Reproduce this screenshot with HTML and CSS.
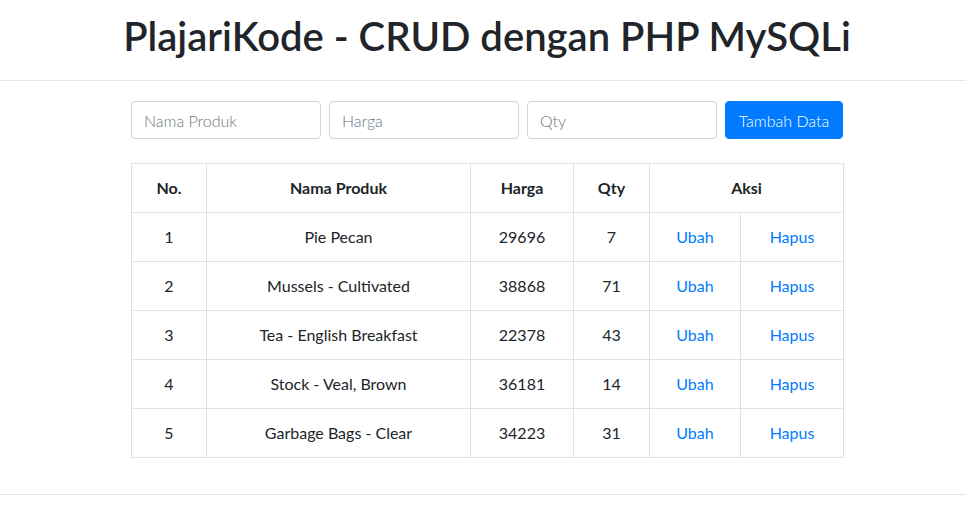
FILE: index.html
```html
<!DOCTYPE html>
<html lang="id">
<head>
  <meta charset="UTF-8">
  <meta name="viewport" content="width=device-width, initial-scale=1.0">
  <title>PlajariKode - CRUD dengan PHP MySQLi</title>
  <link rel="stylesheet" href="styles.css">
</head>
<body>
  <h1>PlajariKode - CRUD dengan PHP MySQLi</h1>
  <hr>
  <div class="container">
    <form class="form-add">
      <input type="text" class="form-control" placeholder="Nama Produk">
      <input type="text" class="form-control" placeholder="Harga">
      <input type="text" class="form-control" placeholder="Qty">
      <button type="button" class="btn-primary">Tambah Data</button>
    </form>

    <table class="table">
      <colgroup>
        <col class="c-no">
        <col class="c-nama">
        <col class="c-harga">
        <col class="c-qty">
        <col class="c-ubah">
        <col class="c-hapus">
      </colgroup>
      <thead>
        <tr>
          <th>No.</th>
          <th>Nama Produk</th>
          <th>Harga</th>
          <th>Qty</th>
          <th colspan="2">Aksi</th>
        </tr>
      </thead>
      <tbody>
        <tr>
          <td>1</td><td>Pie Pecan</td><td>29696</td><td>7</td>
          <td><a href="#">Ubah</a></td><td><a href="#">Hapus</a></td>
        </tr>
        <tr>
          <td>2</td><td>Mussels - Cultivated</td><td>38868</td><td>71</td>
          <td><a href="#">Ubah</a></td><td><a href="#">Hapus</a></td>
        </tr>
        <tr>
          <td>3</td><td>Tea - English Breakfast</td><td>22378</td><td>43</td>
          <td><a href="#">Ubah</a></td><td><a href="#">Hapus</a></td>
        </tr>
        <tr>
          <td>4</td><td>Stock - Veal, Brown</td><td>36181</td><td>14</td>
          <td><a href="#">Ubah</a></td><td><a href="#">Hapus</a></td>
        </tr>
        <tr>
          <td>5</td><td>Garbage Bags - Clear</td><td>34223</td><td>31</td>
          <td><a href="#">Ubah</a></td><td><a href="#">Hapus</a></td>
        </tr>
      </tbody>
    </table>
  </div>
  <hr>
</body>
</html>
```

FILE: styles.css
```css
body {
  margin: 0;
  font-family: Lato, "Noto Sans", sans-serif;
  font-size: 16px;
  line-height: 1.5;
  color: #212529;
  background: #fff;
}
h1 {
  margin: 12px 0 20px;
  padding-left: 8px;
  font-size: 40px;
  font-weight: 600;
  line-height: 48px;
  text-align: center;
}
hr {
  margin: 0;
  border: 0;
  border-top: 1px solid rgba(0,0,0,0.1);
}
.container {
  width: 712px;
  margin: 20px auto 36px;
  padding-left: 8px;
}
.form-add {
  display: flex;
  gap: 8px;
  margin-bottom: 24px;
}
.form-control {
  width: 190px;
  height: 38px;
  box-sizing: border-box;
  padding: 6px 12px;
  font-family: inherit;
  font-size: 16px;
  color: #495057;
  border: 1px solid #ced4da;
  border-radius: 4px;
}
.form-control::placeholder {
  color: #6c757d;
  font-weight: 300;
}
.btn-primary {
  flex: 1;
  height: 38px;
  padding: 6px 10px;
  font-family: inherit;
  font-size: 16px;
  font-weight: 300;
  white-space: nowrap;
  color: #fff;
  background: #007bff;
  border: 1px solid #007bff;
  border-radius: 4px;
  cursor: pointer;
}
.table {
  width: 712px;
  border-collapse: collapse;
  table-layout: fixed;
}
.table th,
.table td {
  padding: 12px;
  border: 1px solid #dee2e6;
  text-align: center;
  vertical-align: top;
}
.table th {
  font-weight: 700;
}
.table a {
  color: #007bff;
  text-decoration: none;
}
.c-no { width: 75px; }
.c-nama { width: 264px; }
.c-harga { width: 103px; }
.c-qty { width: 76px; }
.c-ubah { width: 91px; }
.c-hapus { width: 103px; }
```
